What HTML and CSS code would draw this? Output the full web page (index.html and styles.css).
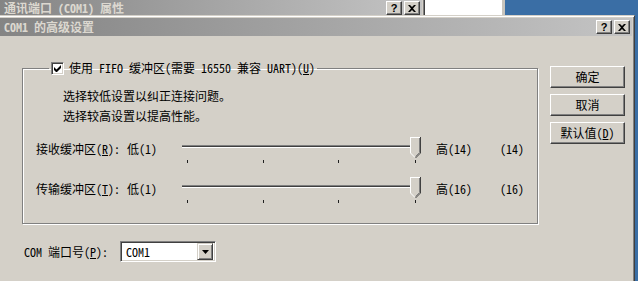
FILE: index.html
```html
<!DOCTYPE html>
<html lang="zh-CN">
<head>
    <meta charset="UTF-8">
    <title>COM1 的高级设置</title>
    <link rel="stylesheet" href="styles.css">
</head>
<body>
    <div class="desktop">
        <div class="window back-window">
            <div class="caption">
                <span class="caption-text">通讯端口 (COM1) 属性</span>
                <div class="caption-buttons">
                    <span class="cap-btn help">?</span>
                    <span class="cap-btn close"><svg width="8" height="7" viewBox="0 0 8 7"><path d="M0 0h2l2 2 2-2h2L5 3.5 8 7H6L4 5 2 7H0l3-3.5z" fill="#000"/></svg></span>
                </div>
            </div>
        </div>
        <div class="sheet"></div>

        <div class="window dialog">
            <div class="caption">
                <span class="caption-text">COM1 的高级设置</span>
                <div class="caption-buttons">
                    <span class="cap-btn help">?</span>
                    <span class="cap-btn close"><svg width="8" height="7" viewBox="0 0 8 7"><path d="M0 0h2l2 2 2-2h2L5 3.5 8 7H6L4 5 2 7H0l3-3.5z" fill="#000"/></svg></span>
                </div>
            </div>

            <div class="dialog-body">
                <div class="main">
                    <fieldset class="group">
                        <legend>
                            <span class="check"><svg width="7" height="7" viewBox="0 0 7 7"><path d="M0 2v3l2 2h1l4-4V0L2.5 4.5z" fill="#000"/></svg></span>
                            使用 FIFO 缓冲区(需要 16550 兼容 UART)(<u>U</u>)
                        </legend>
                        <p class="hint first">选择较低设置以纠正连接问题。</p>
                        <p class="hint">选择较高设置以提高性能。</p>

                        <div class="slider-row">
                            <span class="cell">接收缓冲区(<u>R</u>):</span>
                            <span class="cell">低(1)</span>
                            <div class="slider">
                                <div class="track"></div>
                                <span class="tick t1"></span><span class="tick t2"></span><span class="tick t3"></span><span class="tick t4"></span>
                                <svg class="thumb" width="11" height="21" viewBox="0 0 11 21" shape-rendering="crispEdges">
                                    <path d="M0 0H11V16L5.5 21.5 0 16Z" fill="#d4d0c8"/>
                                    <path d="M0.5 16V0.5H10" stroke="#fff" fill="none"/>
                                    <path d="M0.5 16L5 20.5" stroke="#fff" fill="none" shape-rendering="auto"/>
                                    <path d="M10.5 0V16L5.5 21" stroke="#404040" fill="none" shape-rendering="auto"/>
                                    <path d="M9.5 1V15.5L5.5 19.5" stroke="#808080" fill="none" shape-rendering="auto"/>
                                </svg>
                            </div>
                            <span class="cell high">高(14)</span>
                            <span class="cell">(14)</span>
                        </div>

                        <div class="slider-row">
                            <span class="cell">传输缓冲区(<u>T</u>):</span>
                            <span class="cell">低(1)</span>
                            <div class="slider">
                                <div class="track"></div>
                                <span class="tick t1"></span><span class="tick t2"></span><span class="tick t3"></span><span class="tick t4"></span>
                                <svg class="thumb" width="11" height="21" viewBox="0 0 11 21" shape-rendering="crispEdges">
                                    <path d="M0 0H11V16L5.5 21.5 0 16Z" fill="#d4d0c8"/>
                                    <path d="M0.5 16V0.5H10" stroke="#fff" fill="none"/>
                                    <path d="M0.5 16L5 20.5" stroke="#fff" fill="none" shape-rendering="auto"/>
                                    <path d="M10.5 0V16L5.5 21" stroke="#404040" fill="none" shape-rendering="auto"/>
                                    <path d="M9.5 1V15.5L5.5 19.5" stroke="#808080" fill="none" shape-rendering="auto"/>
                                </svg>
                            </div>
                            <span class="cell high">高(16)</span>
                            <span class="cell">(16)</span>
                        </div>
                    </fieldset>

                    <div class="port-row">
                        <label class="port-label">COM 端口号(<u>P</u>):</label>
                        <div class="combo">
                            <span class="combo-value">COM1</span>
                            <span class="combo-drop"><svg width="7" height="4" viewBox="0 0 7 4"><path d="M0 0h7L3.5 4z" fill="#000"/></svg></span>
                        </div>
                    </div>
                </div>

                <div class="actions">
                    <button class="btn">确定</button>
                    <button class="btn">取消</button>
                    <button class="btn">默认值(<u>D</u>)</button>
                </div>
            </div>
        </div>
    </div>
</body>
</html>
```

FILE: styles.css
```css
body {
    margin: 0;
    padding: 0;
    background-color: #3a6ea5;
    font-family: "Noto Sans Mono CJK SC", "Noto Sans CJK SC", monospace;
    font-size: 12px;
    color: #000;
}

.desktop {
    position: relative;
    width: 638px;
    height: 281px;
    overflow: hidden;
    background-color: #3a6ea5;
}

/* classic window frame */
.window {
    position: absolute;
    box-sizing: border-box;
    background-color: #d4d0c8;
    border: 1px solid;
    border-color: #d4d0c8 #404040 #404040 #d4d0c8;
    box-shadow: inset 1px 1px #fff, inset -1px -1px #808080;
    padding: 2px;
}

.back-window {
    left: -4px;
    top: -4px;
    width: 429px;
    height: 120px;
}

.sheet {
    position: absolute;
    left: 425px;
    top: 0;
    width: 77px;
    height: 16px;
    background-color: #fff;
    border-right: 3px solid #c8c4bc;
}

.dialog {
    left: -4px;
    top: 15px;
    width: 639px;
    height: 300px;
}

.caption {
    display: flex;
    align-items: center;
    height: 18px;
    padding: 0 2px 0 5px;
    background: linear-gradient(to right, #848484, #c4c4c4);
}

.caption-text {
    color: #dcd8d0;
    font-weight: bold;
    line-height: 18px;
    white-space: nowrap;
}

.caption-buttons {
    display: flex;
    gap: 2px;
    margin-left: auto;
}

.cap-btn {
    display: flex;
    align-items: center;
    justify-content: center;
    box-sizing: border-box;
    width: 16px;
    height: 14px;
    background-color: #d4d0c8;
    border: 1px solid;
    border-color: #fff #404040 #404040 #fff;
    box-shadow: inset -1px -1px #808080;
    font-family: "Liberation Sans", sans-serif;
    font-weight: bold;
    font-size: 11px;
    line-height: 12px;
}

.dialog-body {
    display: flex;
    height: 260px;
}

.main {
    padding: 24px 0 0 23px;
}

.group {
    box-sizing: border-box;
    width: 516px;
    margin: 0;
    padding: 0 0 20px 0;
    border: 1px solid #808080;
    box-shadow: inset 1px 1px #fff, 1px 1px #fff;
}

.group legend {
    display: flex;
    align-items: center;
    margin-left: 26px;
    padding: 0 2px;
    line-height: 16px;
}

.check {
    display: flex;
    align-items: center;
    justify-content: center;
    box-sizing: border-box;
    width: 13px;
    height: 13px;
    margin-right: 5px;
    background-color: #fff;
    border: 1px solid;
    border-color: #808080 #fff #fff #808080;
    box-shadow: inset 1px 1px #404040, inset -1px -1px #d4d0c8;
}

.hint {
    margin: 0 0 0 40px;
    line-height: 20px;
}

.hint.first {
    margin-top: 10px;
}

.slider-row {
    display: grid;
    grid-template-columns: 91px 55px 239px 79px auto;
    height: 26px;
    margin: 11px 0 0 13px;
}

.slider-row + .slider-row {
    margin-top: 14px;
}

.slider-row .cell {
    padding-top: 4px;
    line-height: 16px;
    white-space: nowrap;
}

.slider-row .high {
    padding-left: 15px;
}

.slider {
    position: relative;
    height: 26px;
}

.track {
    position: absolute;
    left: 0;
    top: 8px;
    width: 234px;
    height: 1px;
    background-color: #404040;
    border-top: 1px solid #808080;
    border-bottom: 1px solid #fff;
}

.tick {
    position: absolute;
    top: 23px;
    width: 1px;
    height: 3px;
    background-color: #202020;
}

.t1 { left: 5px; }
.t2 { left: 81px; }
.t3 { left: 156px; }
.t4 { left: 233px; }

.thumb {
    position: absolute;
    left: 228px;
    top: 0;
}

.port-row {
    display: flex;
    align-items: center;
    margin: 17px 0 0 2px;
}

.port-label {
    width: 96px;
    line-height: 16px;
}

.combo {
    display: flex;
    align-items: center;
    box-sizing: border-box;
    width: 96px;
    height: 21px;
    background-color: #fff;
    border: 1px solid;
    border-color: #808080 #fff #fff #808080;
    box-shadow: inset 1px 1px #404040, inset -1px -1px #d4d0c8;
    padding: 1px;
}

.combo-value {
    flex: 1;
    padding-left: 4px;
    line-height: 16px;
}

.combo-drop {
    display: flex;
    align-items: center;
    justify-content: center;
    box-sizing: border-box;
    width: 16px;
    height: 17px;
    margin-right: 1px;
    background-color: #d4d0c8;
    border: 1px solid;
    border-color: #d4d0c8 #404040 #404040 #d4d0c8;
    box-shadow: inset 1px 1px #fff, inset -1px -1px #808080;
}

.actions {
    display: flex;
    flex-direction: column;
    gap: 6px;
    margin: 30px 0 0 12px;
}

.btn {
    box-sizing: border-box;
    width: 75px;
    height: 22px;
    padding: 0;
    background-color: #d4d0c8;
    border: 1px solid;
    border-color: #fff #404040 #404040 #fff;
    box-shadow: inset -1px -1px #808080;
    font-family: inherit;
    font-size: 12px;
    line-height: 16px;
    color: #000;
}
```
